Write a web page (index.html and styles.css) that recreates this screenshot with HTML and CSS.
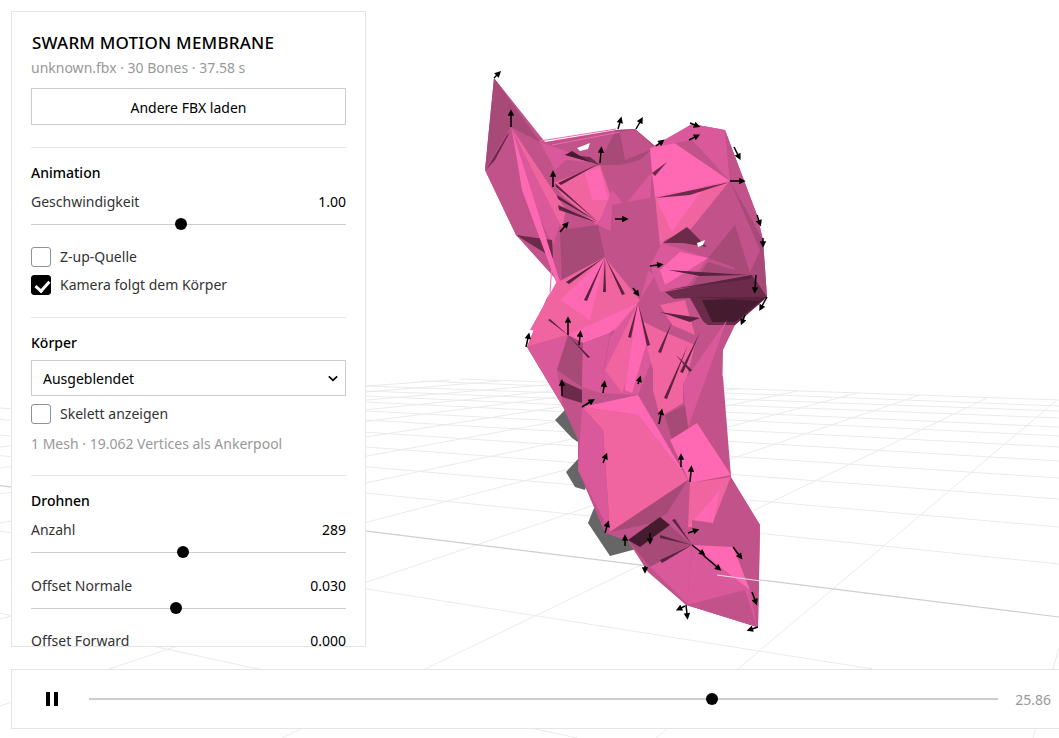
FILE: index.html
```html
<!DOCTYPE html>
<html lang="de">

<head>
    <meta charset="utf-8">
    <meta name="viewport" content="width=device-width, initial-scale=1.0">
    <title>Swarm Motion Membrane</title>
    <link rel="stylesheet" href="styles.css">
</head>

<body>
    <svg class="stage" viewBox="0 0 1059 738" width="1059" height="738" aria-hidden="true">
        <defs>
            <marker id="head" viewBox="0 0 8 8" refX="1" refY="4" markerWidth="8" markerHeight="6.5" markerUnits="userSpaceOnUse" orient="auto">
                <path d="M0 0 L8 4 L0 8 Z" fill="#000"/>
            </marker>
        </defs>

        <!-- ground grid -->
        <g class="grid">
            <path d="M460 379 L1059 400"/>
            <path d="M420 381 L1059 406"/>
            <path d="M366 386 L1059 411"/>
            <path d="M366 391 L1059 418"/>
            <path d="M366 396 L1059 427"/>
            <path d="M366 402 L1059 436"/>
            <path d="M366 411 L1059 447"/>
            <path d="M366 420 L1059 461"/>
            <path d="M0 408 L1059 478"/>
            <path d="M0 419.5 L1059 499"/>
            <path d="M0 435 L1059 527"/>
            <path d="M0 455.6 L1059 564"/>
            <path d="M0 531 L873 669"/>
            <path d="M0 613 L577 738"/>
            <path d="M282 738 L987 398"/>
            <path d="M656 738 L1057 400"/>
            <path d="M1033 738 L1059 648"/>
            <path d="M0 706 L920 395"/>
            <path d="M0 619 L857 393"/>
            <path d="M0 561 L797 391"/>
            <path d="M0 523 L740 388"/>
            <path d="M0 494 L700 385"/>
            <path d="M0 468 L660 384"/>
            <path d="M0 447 L620 384"/>
            <path d="M366 400 L580 382"/>
            <path d="M366 392 L500 381"/>
            <path d="M366 386 L450 380"/>
        </g>
        <path class="axis" d="M0 485.6 L1059 617"/>

        <!-- shadow on the floor -->
        <g class="shadow">
            <polygon points="555,420 566,409 590,418 585,447 572,438"/>
            <polygon points="566,472 578,459 590,470 585,490 575,487"/>
            <polygon points="588,523 594,508 650,530 640,548 610,556"/>
        </g>

        <!-- membrane -->
        <polygon class="f-mid" points="494,78 485,170 516,235 561,285 546,300 527,347 563,407 578,440 578,470 605,533 628,541 648,572 686,605 758,627 760,525 731,478 722,400 723,350 735,325 767,297 763,240 757,215 725,130 692,124 656,147 635,129 616,130 545,142"/>

        <!-- left leaf -->
        <polygon class="f-mauve" points="494,78 540,142 511,127"/>
        <polygon class="f-mauve" points="494,78 511,127 485,170"/>
        <polygon class="f-mid" points="511,127 485,170 516,235"/>
        <polygon class="f-mid" points="511,127 516,235 553,245 563,215"/>
        <polygon class="f-rose" points="511,127 563,215 553,245 525,190"/>
        <polygon class="f-light" points="511,127 566,210 562,228 535,175"/>
        <polygon class="f-plum" points="516,235 553,258 552,240"/>
        <polygon class="f-hot" points="512,130 561,285 557,285 522,190"/>
        <polygon class="f-plum" points="486,170 507,135 510,132 495,160"/>

        <!-- top dome -->
        <polygon class="f-rose" points="540,142 600,163 566,160 555,170"/>
        <polygon class="f-mauve" points="598,165 616,130 635,129 656,147 640,160 620,165"/>
        <polygon class="f-mid" points="620,132 635,129 655,148 625,160"/>
        <polygon class="f-plum" points="563,154 600,165 590,157"/>
        <polygon class="f-dark" points="565,155 572,151 590,162"/>
        <polygon class="f-white" points="577,148 590,143 588,149 580,151"/>
        <polygon class="f-light" points="553,183 600,165 612,200 597,225 562,195"/>
        <polygon class="f-hot" points="585,172 600,168 608,200 592,200"/>

        <!-- big central lobes -->
        <polygon class="f-rose" points="598,225 612,190 653,148 650,210 655,240 612,232"/>
        <polygon class="f-mid" points="612,190 653,148 652,172 625,205"/>
        <polygon class="f-hot" points="650,148 670,140 730,181 655,197 652,172"/>
        <polygon class="f-rose" points="692,124 725,130 730,181 692,140 650,148"/>
        <polygon class="f-mid" points="725,130 757,215 763,240 730,181"/>
        <polygon class="f-mauve" points="730,181 763,240 767,297 735,270"/>
        <polygon class="f-light" points="655,197 730,181 692,228 665,240 660,246"/>
        <polygon class="f-hot" points="655,197 705,186 672,232"/>
        <polygon class="f-mid" points="730,181 692,228 708,258 750,273 760,250"/>
        <polygon class="f-mauve" points="708,258 750,273 735,225"/>
        <polygon class="f-mid" points="612,205 655,197 657,230 660,246 640,262 610,250"/>
        <polygon class="f-plum" points="655,198 730,182 690,195"/>
        <polygon class="f-plum" points="652,173 667,162 655,176"/>
        <polygon class="f-plum" points="663,243 687,227 707,247 683,243"/>
        <polygon class="f-white" points="697,243 705,240 703,245 698,247"/>
        <polygon class="f-rose" points="650,265 662,243 708,258 688,285 660,292"/>
        <polygon class="f-hot" points="660,270 680,252 708,258 665,285"/>

        <!-- dark band on the right -->
        <polygon class="f-mauve" points="690,288 708,262 752,275 767,297 720,305"/>
        <polygon class="f-plum" points="665,292 752,275 767,297 735,325 708,325"/>
        <polygon class="f-dark" points="702,300 765,298 735,322 712,322"/>
        <polygon class="f-mid" points="648,300 690,298 708,330 690,345 660,325"/>
        <polygon class="f-light" points="660,305 685,300 695,335 672,325"/>

        <!-- left shoulder -->
        <polygon class="f-mauve" points="560,230 598,225 605,257 562,283"/>
        <polygon class="f-light" points="556,283 605,257 640,300 620,330 568,335 530,330"/>
        <polygon class="f-hot" points="560,300 605,257 590,320"/>
        <polygon class="f-rose" points="605,257 640,300 655,275 635,262"/>
        <polygon class="f-mid" points="605,257 612,232 655,240 650,265 640,300"/>

        <polygon class="f-light" points="527,347 568,335 540,320 546,300"/>
        <polygon class="f-rose" points="527,347 568,335 557,370 563,407"/>
        <polygon class="f-hot" points="568,335 638,303 610,333 583,343"/>
        <polygon class="f-mauve" points="568,335 583,343 582,387 557,370"/>
        <polygon class="f-rose" points="583,343 610,333 600,393 582,387"/>
        <polygon class="f-rose" points="638,303 653,357 638,395 600,393 610,337"/>
        <polygon class="f-light" points="638,303 640,345 622,393 605,370"/>
        <polygon class="f-hot" points="638,303 646,345 632,393 625,390"/>
        <polygon class="f-plum" points="560,380 562,397 582,403 582,390"/>
        <polygon class="f-light" points="640,320 660,330 695,345 685,385 653,370"/>
        <polygon class="f-mid" points="653,370 660,417 640,395"/>

        <!-- right strip -->
        <polygon class="f-rose" points="683,383 727,320 710,367 697,403 687,430"/>
        <polygon class="f-light" points="653,367 683,383 683,403 660,417 653,390"/>
        <polygon class="f-mauve" points="665,415 685,405 690,440 672,440"/>
        <polygon class="f-mid" points="723,377 731,477 697,427 717,367"/>

        <!-- big diamond -->
        <polygon class="f-light" points="582,407 638,415 688,480 610,532 603,430"/>
        <polygon class="f-hot" points="582,407 638,395 688,480 638,415"/>
        <polygon class="f-rose" points="582,407 603,430 610,532 578,470"/>
        <polygon class="f-mauve" points="610,532 688,480 667,513 653,523"/>

        <!-- lower body -->
        <polygon class="f-hot" points="670,440 697,423 731,475 690,483"/>
        <polygon class="f-light" points="731,477 690,483 688,527 713,523"/>
        <polygon class="f-hot" points="720,490 713,523 688,527"/>
        <polygon class="f-mid" points="731,477 760,525 733,547 713,523"/>
        <polygon class="f-mauve" points="628,540 660,517 692,545 650,567"/>
        <polygon class="f-dark" points="628,540 660,517 670,525 640,547"/>
        <polygon class="f-rose" points="650,567 692,545 687,603"/>
        <polygon class="f-mid" points="692,545 692,520 713,523 733,547"/>
        <polygon class="f-rose" points="692,545 750,590 757,627 687,605"/>
        <polygon class="f-mid" points="687,605 745,590 757,627"/>
        <polygon class="f-hot" points="692,545 733,547 750,590"/>
        <polygon class="f-mid" points="750,590 760,525 758,627"/>

        <!-- thin dark wedges of the triangle fans -->
        <g class="keil">
            <path d="M598 222 L555 183 L556 187Z M598 222 L557 195 L558 199Z M598 223 L558 205 L559 210Z M600 163 L558 183 L561 185Z"/>
            <path d="M605 257 L566 282 L569 284Z M605 257 L584 300 L587 301Z M605 257 L603 292 L606 292Z M605 257 L622 295 L625 294Z"/>
            <path d="M668 290 L752 275 L750 279Z M690 297 L765 297 L760 301Z M668 270 L748 275 L700 276Z M660 312 L700 318 L690 322Z"/>
            <path d="M568 335 L548 320 L550 319Z M568 335 L590 357 L588 358Z M638 303 L628 337 L631 338Z M638 303 L650 345 L647 346Z"/>
            <path d="M688 345 L664 398 L667 399Z M700 332 L680 372 L683 373Z M672 322 L658 352 L661 353Z M676 355 L690 372 L692 370Z"/>
            <path d="M692 545 L660 535 L660 538Z M692 545 L672 520 L675 519Z M692 545 L660 560 L662 563Z"/>
        </g>
        <g class="wisp">
            <path d="M540 141 L616 129 M552 145 L620 132 M550 292 L552 265 M546 300 L551 292"/>
        </g>
        <path class="axis-over" d="M717 575 L761 581"/>

        <!-- drone direction arrows -->
        <g class="arrows">
            <line x1="494" y1="78" x2="497" y2="75" marker-end="url(#head)"/>
            <line x1="511" y1="127" x2="511" y2="115" marker-end="url(#head)"/>
            <line x1="553" y1="187" x2="553" y2="176" marker-end="url(#head)"/>
            <line x1="600" y1="163" x2="601" y2="152" marker-end="url(#head)"/>
            <line x1="618" y1="129" x2="620" y2="122" marker-end="url(#head)"/>
            <line x1="636" y1="129" x2="640" y2="122" marker-end="url(#head)"/>
            <line x1="656" y1="146" x2="660" y2="143" marker-end="url(#head)"/>
            <line x1="690" y1="123" x2="695" y2="125" marker-end="url(#head)"/>
            <line x1="689" y1="140" x2="695" y2="137" marker-end="url(#head)"/>
            <line x1="734" y1="147" x2="738" y2="155" marker-end="url(#head)"/>
            <line x1="730" y1="181" x2="740" y2="181" marker-end="url(#head)"/>
            <line x1="615" y1="219" x2="623" y2="219" marker-end="url(#head)"/>
            <line x1="560" y1="232" x2="565" y2="226" marker-end="url(#head)"/>
            <line x1="650" y1="266" x2="658" y2="265" marker-end="url(#head)"/>
            <line x1="756" y1="275" x2="755" y2="288" marker-end="url(#head)"/>
            <line x1="767" y1="297" x2="762" y2="306" marker-end="url(#head)"/>
            <line x1="745" y1="315" x2="743" y2="320" marker-end="url(#head)"/>
            <line x1="757" y1="215" x2="759" y2="221" marker-end="url(#head)"/>
            <line x1="763" y1="238" x2="763" y2="242" marker-end="url(#head)"/>
            <line x1="633" y1="288" x2="636" y2="292" marker-end="url(#head)"/>
            <line x1="526" y1="347" x2="528" y2="338" marker-end="url(#head)"/>
            <line x1="568" y1="335" x2="568" y2="322" marker-end="url(#head)"/>
            <line x1="579" y1="345" x2="580" y2="336" marker-end="url(#head)"/>
            <line x1="562" y1="396" x2="562" y2="385" marker-end="url(#head)"/>
            <line x1="582" y1="407" x2="590" y2="402" marker-end="url(#head)"/>
            <line x1="603" y1="393" x2="604" y2="386" marker-end="url(#head)"/>
            <line x1="638" y1="384" x2="639" y2="381" marker-end="url(#head)"/>
            <line x1="659" y1="424" x2="661" y2="414" marker-end="url(#head)"/>
            <line x1="681" y1="467" x2="681" y2="459" marker-end="url(#head)"/>
            <line x1="690" y1="482" x2="691" y2="471" marker-end="url(#head)"/>
            <line x1="603" y1="463" x2="605" y2="458" marker-end="url(#head)"/>
            <line x1="605" y1="533" x2="607" y2="526" marker-end="url(#head)"/>
            <line x1="625" y1="546" x2="625" y2="540" marker-end="url(#head)"/>
            <line x1="650" y1="533" x2="650" y2="539" marker-end="url(#head)"/>
            <line x1="688" y1="533" x2="694" y2="531" marker-end="url(#head)"/>
            <line x1="692" y1="545" x2="701" y2="552" marker-end="url(#head)"/>
            <line x1="733" y1="547" x2="739" y2="555" marker-end="url(#head)"/>
            <line x1="703" y1="555" x2="717" y2="567" marker-end="url(#head)"/>
            <line x1="645" y1="566" x2="645" y2="568" marker-end="url(#head)"/>
            <line x1="752" y1="592" x2="755" y2="600" marker-end="url(#head)"/>
            <line x1="686" y1="605" x2="687" y2="614" marker-end="url(#head)"/>
            <line x1="685" y1="606" x2="681" y2="608" marker-end="url(#head)"/>
            <line x1="758" y1="627" x2="752" y2="629" marker-end="url(#head)"/>
        </g>
    </svg>

    <aside class="panel">
        <h1 class="titel">SWARM MOTION MEMBRANE</h1>
        <p class="info">unknown.fbx · 30 Bones · 37.58 s</p>
        <button class="knap" type="button">Andere FBX laden</button>

        <section class="sektion">
            <h2>Animation</h2>
            <label class="raekke"><span>Geschwindigkeit</span><span class="vaerdi">1.00</span></label>
            <input class="slider" type="range" min="0" max="1000" value="475">
            <label class="check check-foerst"><input type="checkbox"><span>Z-up-Quelle</span></label>
            <label class="check check-naeste"><input type="checkbox" checked><span>Kamera folgt dem Körper</span></label>
        </section>

        <section class="sektion">
            <h2>Körper</h2>
            <div class="vaelg">
                <select>
                    <option>Ausgeblendet</option>
                </select>
                <svg class="pil" viewBox="0 0 12 8" width="10" height="7" aria-hidden="true">
                    <path d="M1 1.5 L6 6.2 L11 1.5" fill="none" stroke="#000" stroke-width="2"/>
                </svg>
            </div>
            <label class="check check-naeste"><input type="checkbox"><span>Skelett anzeigen</span></label>
            <p class="info note">1 Mesh · 19.062 Vertices als Ankerpool</p>
        </section>

        <section class="sektion sektion-taet">
            <h2>Drohnen</h2>
            <label class="raekke"><span>Anzahl</span><span class="vaerdi">289</span></label>
            <input class="slider" type="range" min="0" max="1000" value="482">
            <label class="raekke raekke-ny"><span>Offset Normale</span><span class="vaerdi">0.030</span></label>
            <input class="slider" type="range" min="0" max="1000" value="460">
            <label class="raekke raekke-ny raekke-sidst"><span>Offset Forward</span><span class="vaerdi">0.000</span></label>
        </section>
    </aside>

    <footer class="transport">
        <button class="pause" type="button" aria-label="Pause">
            <svg viewBox="0 0 12 14" width="12" height="14">
                <rect x="0" y="0" width="4" height="14" fill="#000"/>
                <rect x="8" y="0" width="4" height="14" fill="#000"/>
            </svg>
        </button>
        <input class="slider tid" type="range" min="0" max="37.58" step="0.01" value="25.86">
        <span class="tidstal">25.86</span>
    </footer>
</body>

</html>
```

FILE: styles.css
```css
* {
    box-sizing: border-box;
}

body {
    margin: 0;
    height: 738px;
    overflow: hidden;
    position: relative;
    background-color: #fff;
    color: #000;
    font-family: "Noto Sans", sans-serif;
    font-size: 14px;
}

/* 3d scene */
.stage {
    position: absolute;
    left: 0;
    top: 0;
    display: block;
}

.grid path {
    fill: none;
    stroke: #ebebeb;
    stroke-width: 1;
}

.axis {
    fill: none;
    stroke: #cfcfcf;
    stroke-width: 1.2;
}

.axis-over {
    stroke: #e4dfe2;
    stroke-width: 1.2;
}

.shadow polygon {
    fill: #666;
}

.shadow {
    filter: blur(0.7px);
}

.f-hot { fill: #ff69b4; }
.f-light { fill: #f0649f; }
.f-rose { fill: #d9599a; }
.f-mid { fill: #c2528a; }
.f-mauve { fill: #a84a78; }
.f-plum { fill: #6d2b4b; }
.f-dark { fill: #451b30; }
.f-white { fill: #fff; }

.keil path {
    fill: #5a2340;
}

.wisp path {
    fill: none;
    stroke: #f16aae;
    stroke-width: 1;
}

.arrows line {
    stroke: #000;
    stroke-width: 1.5;
}

/* side panel */
.panel {
    position: absolute;
    left: 11px;
    top: 11px;
    width: 355px;
    height: 636px;
    padding: 20px 19px;
    overflow: hidden;
    background-color: #fff;
    border: 1px solid #e5e5e5;
}

.titel {
    margin: 0 0 0 1px;
    font-size: 17px;
    line-height: 22px;
    font-weight: 500;
    letter-spacing: 0.2px;
}

.info {
    margin: 4px 0 0;
    color: #999;
    line-height: 19px;
}

.knap {
    display: block;
    width: 100%;
    height: 37px;
    margin-top: 11px;
    padding: 1px 0 0;
    background-color: #fff;
    border: 1px solid #ccc;
    border-radius: 0;
    color: #000;
    font: inherit;
}

.sektion {
    margin-top: 22px;
    padding-top: 15px;
    border-top: 1px solid #e5e5e5;
}

.sektion-taet {
    margin-top: 21px;
}

.sektion h2 {
    margin: 0;
    font-size: 14px;
    line-height: 20px;
    font-weight: 500;
}

.raekke {
    display: flex;
    justify-content: space-between;
    margin-top: 9px;
    color: #333;
    line-height: 20px;
}

.raekke-ny {
    margin-top: 16px;
}

.raekke-sidst {
    margin-top: 15px;
}

.vaerdi {
    color: #000;
}

.slider {
    display: block;
    width: 100%;
    height: 16px;
    margin: 4px 0 0;
    background: transparent;
    appearance: none;
    -webkit-appearance: none;
}

.slider::-webkit-slider-runnable-track {
    height: 1px;
    background-color: #ccc;
}

.slider::-webkit-slider-thumb {
    width: 12px;
    height: 12px;
    margin-top: -6px;
    border-radius: 50%;
    background-color: #000;
    appearance: none;
    -webkit-appearance: none;
}

.check {
    display: flex;
    align-items: center;
    gap: 9px;
    color: #333;
    line-height: 20px;
}

.check-foerst {
    margin-top: 15px;
}

.check-naeste {
    margin-top: 8px;
}

.check input {
    position: relative;
    width: 20px;
    height: 20px;
    margin: 0;
    flex: none;
    border: 1px solid #8f8f9d;
    border-radius: 3px;
    background-color: #fff;
    appearance: none;
    -webkit-appearance: none;
}

.check input:checked {
    background-color: #000;
    border-color: #000;
}

.check input:checked::after {
    content: "";
    position: absolute;
    left: 6px;
    top: 2px;
    width: 6px;
    height: 11px;
    border: solid #fff;
    border-width: 0 3px 3px 0;
    transform: rotate(42deg);
}

.vaelg {
    position: relative;
    margin-top: 7px;
}

.vaelg select {
    display: block;
    width: 100%;
    height: 36px;
    padding: 0 11px;
    background-color: #fff;
    border: 1px solid #ccc;
    border-radius: 0;
    color: #000;
    font: inherit;
    appearance: none;
    -webkit-appearance: none;
}

.pil {
    position: absolute;
    right: 8px;
    top: 15px;
}

.note {
    margin-top: 10px;
    line-height: 20px;
}

/* timeline */
.transport {
    position: absolute;
    left: 11px;
    right: -1px;
    top: 669px;
    height: 60px;
    display: flex;
    align-items: center;
    padding-right: 8px;
    background-color: #fff;
    border: 1px solid #e5e5e5;
}

.pause {
    width: 77px;
    padding: 0 0 0 34px;
    flex: none;
    display: flex;
    align-items: center;
    background: none;
    border: 0;
    height: 14px;
}

.slider.tid {
    flex: 1;
    margin: 0;
}

.tid::-webkit-slider-runnable-track {
    height: 2px;
}

.tid::-webkit-slider-thumb {
    margin-top: -5px;
}

.tidstal {
    margin-left: 17px;
    color: #999;
}
```
